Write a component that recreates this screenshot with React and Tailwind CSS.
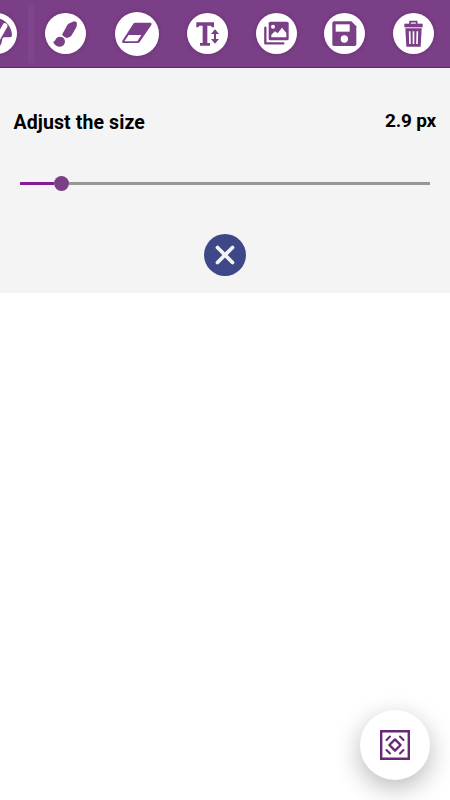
import { X } from "lucide-react";

const P = "#7b3f87";

const PaletteIcon = () => (
  <svg viewBox="0 0 123 123" className="size-full" fill={P}>
    <path d="M61 15C88 17 107 40 108 66Q108 73 102 73H86Q78 74 78 84Q76 95 69 101C30 100 15 80 15 60S36 15 61 15Z" />
    <path d="M87 38L66 76" fill="none" stroke="white" strokeWidth="15" strokeLinecap="round" />
  </svg>
);

const BrushIcon = () => (
  <svg viewBox="0 0 123 123" className="size-full" fill={P}>
    <path d="M51 65L67 36Q70 31 75 30L87 25Q96 26 96 33L94 43L80 67Q76 74 66 75Q57 73 51 65Z" />
    <path d="M24 86C33 87 29 72 44 71C55 70 63 80 59 91C55 105 32 106 24 86Z" />
  </svg>
);

const EraserIcon = () => (
  <svg viewBox="0 0 132 132" className="size-full" fill={P}>
    <path
      fillRule="evenodd"
      d="M60 32H107Q112 34 109 39L74 90Q72 93 68 93H24Q19 91 22 86L55 35Q57 32 60 32ZM41 69L28 88H67L79 69Z"
    />
  </svg>
);

const TextIcon = () => (
  <svg viewBox="0 0 123 123" className="size-full" fill={P}>
    <path d="M28 28H81V43H75L72 38H61V90H69V98H39V90H47V38H37L34 43H28Z" />
    <path d="M84 49L96 63H87V78H96L84 92L72 78H81V63H72Z" />
  </svg>
);

const GalleryIcon = () => (
  <svg viewBox="0 0 123 123" className="size-full" fill={P}>
    <path d="M28 44V91H82" fill="none" stroke={P} strokeWidth="7" strokeLinecap="round" strokeLinejoin="round" />
    <rect x="38" y="26" width="60" height="56" rx="5" />
    <circle cx="51" cy="41" r="6" fill="white" />
    <path d="M46 73V65L57 55L65 61L78 44L91 60V73Z" fill="white" />
  </svg>
);

const SaveIcon = () => (
  <svg viewBox="0 0 123 123" className="size-full" fill={P}>
    <path d="M30 25H82L97 40V94Q97 99 92 99H30Q25 99 25 94V30Q25 25 30 25Z" />
    <path d="M35 34H77V56H35Z" fill="white" />
    <circle cx="61" cy="78" r="11" fill="white" />
  </svg>
);

const TrashIcon = () => (
  <svg viewBox="0 0 123 123" className="size-full" fill={P}>
    <path d="M51 33V26H71V33" fill="none" stroke={P} strokeWidth="5" />
    <path d="M34 32H89V43H34Z" />
    <path d="M37 46H86L83 101H40Z" />
    <path d="M50 55L51 93M61.500 55V93M73 55L72 93" stroke="white" strokeWidth="5" />
  </svg>
);

const FitIcon = () => (
  <svg viewBox="0 0 30 30" className="size-[30px]" fill="none" stroke="#672875">
    <path d="M1.200 1.200H28.800V28.800H1.200Z" strokeWidth="2.400" />
    <path d="M15 9.400L20.600 15L15 20.600L9.400 15Z" strokeWidth="2.400" strokeLinejoin="round" />
    <path
      d="M6.500 10L10 6.500M20 6.500L23.500 10M6.500 20L10 23.500M20 23.500L23.500 20"
      strokeWidth="2.100"
      strokeLinecap="round"
    />
  </svg>
);

const tools = [
  { name: "brush", Icon: BrushIcon },
  { name: "eraser", Icon: EraserIcon, large: true },
  { name: "text", Icon: TextIcon },
  { name: "gallery", Icon: GalleryIcon },
  { name: "save", Icon: SaveIcon },
  { name: "trash", Icon: TrashIcon },
];

const Toolbar = () => (
  <div className="h-[68px] bg-[#7b3f87] border-b border-[#632570] overflow-hidden">
    <div className="flex items-center gap-[27.500px] h-[67px] -ml-[24px]">
      <button className="size-[41px] shrink-0 rounded-full bg-white shadow-[0_0_4px_rgba(60,10,70,0.3)]">
        <PaletteIcon />
      </button>
      <div className="w-1.5 h-[58px] shrink-0 -ml-[17px] -mr-[16px] bg-[#7f448b]" />
      {tools.map(({ name, Icon, large }) => (
        <button
          key={name}
          className={
            large
              ? "size-11 mx-[1px] shrink-0 rounded-full bg-white shadow-[0_0_4px_rgba(60,10,70,0.3)]"
              : "size-[41px] shrink-0 rounded-full bg-white shadow-[0_0_4px_rgba(60,10,70,0.3)]"
          }
        >
          <Icon />
        </button>
      ))}
    </div>
  </div>
);

const SizePanel = () => (
  <div className="h-[225px] bg-[#f4f4f4] pt-[42px] flex flex-col">
    <div className="flex justify-between h-6 pl-[13.500px] pr-[14px] text-black font-bold leading-6">
      <div className="mt-px text-[19.500px] tracking-[0.1px]">Adjust the size</div>
      <div className="-mt-px text-[19px] tracking-[-0.2px]">2.9 px</div>
    </div>
    <div className="mx-5 mt-[42px] h-[15px] flex items-center">
      <div className="w-[34px] h-[3px] bg-[#861b96]" />
      <div className="size-[15px] rounded-full bg-[#7b3f87]" />
      <div className="flex-1 h-[3px] bg-[#979797]" />
    </div>
    <button className="size-[42px] mt-[43px] mx-auto rounded-full bg-[#3e4888] flex items-center justify-center">
      <X size={30} strokeWidth={3} className="text-[#f4f4f4]" />
    </button>
  </div>
);

const App = () => {
  return (
    <div className="h-[800px] w-[450px] bg-white flex flex-col overflow-hidden font-[Roboto,sans-serif]">
      <Toolbar />
      <SizePanel />
      <div className="flex-1 flex items-end justify-end p-5">
        <button className="size-[70px] rounded-full bg-white flex items-center justify-center shadow-[0_8px_26px_rgba(0,0,0,0.28)]">
          <FitIcon />
        </button>
      </div>
    </div>
  );
};

export default App;
